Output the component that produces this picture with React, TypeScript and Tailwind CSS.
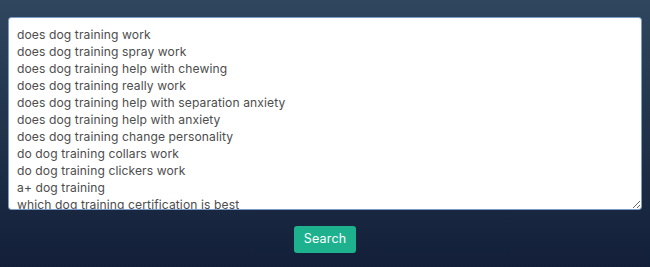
import { useState } from "react";

const lines = [
  "does dog training work",
  "does dog training spray work",
  "does dog training help with chewing",
  "does dog training really work",
  "does dog training help with separation anxiety",
  "does dog training help with anxiety",
  "does dog training change personality",
  "do dog training collars work",
  "do dog training clickers work",
  "a+ dog training",
  "which dog training certification is best",
  "why dog training is important",
  "why dog training is important",
];

export default function App() {
  const [text, setText] = useState(lines.join("\n"));

  return (
    <div className="w-[650px] h-[267px] bg-gradient-to-b from-[#30465f] to-[#131f38] px-2 pt-[17px] flex flex-col items-center font-['Inter','Liberation_Sans',sans-serif]">
      <textarea
        value={text}
        onChange={(e) => setText(e.target.value)}
        className="w-full h-[193px] bg-white border border-[#7b9ccb] rounded-[3px] px-2 pt-[8px] pb-1 text-[12.1px] leading-[17px] tracking-[0.1px] text-[#4d4d4d] outline-none"
      />
      <button className="mt-4 h-[27px] w-[62px] bg-[#1eb18e] text-white text-[12.5px] tracking-[0.2px] rounded-[3px]">
        Search
      </button>
    </div>
  );
}
